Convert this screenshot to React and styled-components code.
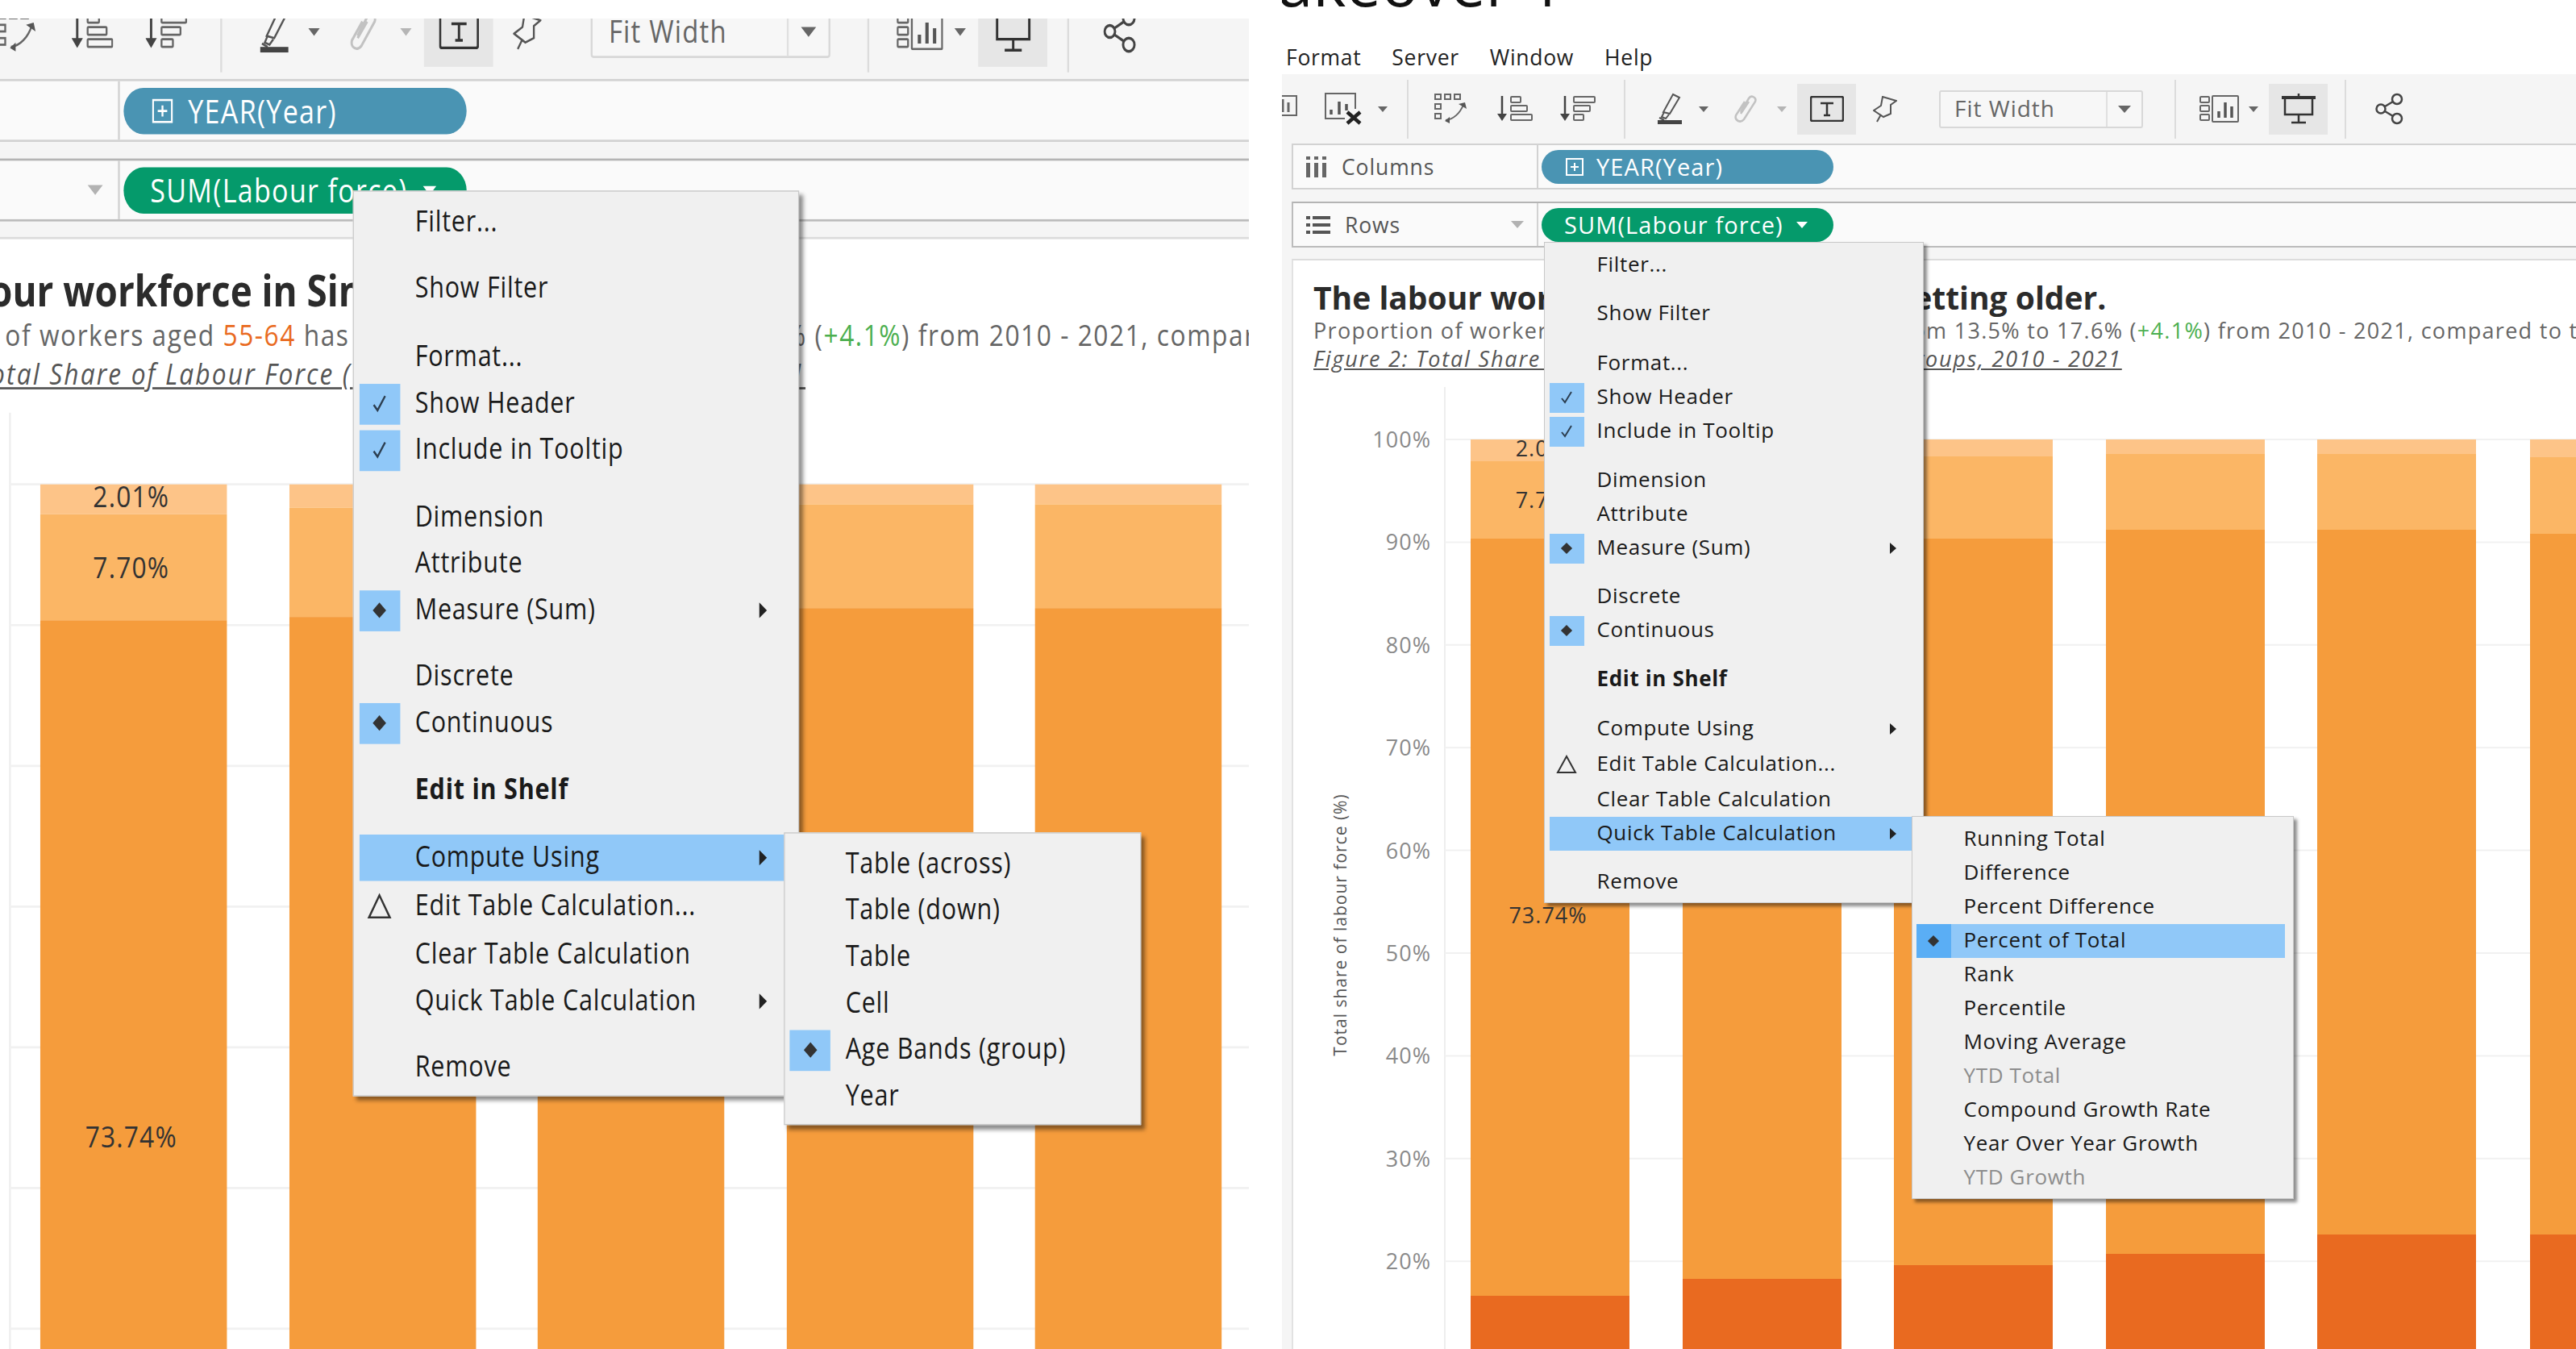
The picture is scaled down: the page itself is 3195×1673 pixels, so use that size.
import React from 'react';
import styled, { createGlobalStyle } from 'styled-components';

const UI_FONT = '"Open Sans", "Noto Sans", Arial, sans-serif';

const GlobalStyle = createGlobalStyle`
  html, body {
    margin: 0;
    padding: 0;
    background: #fff;
    overflow: hidden;
  }
  * {
    box-sizing: border-box;
  }
`;

const Page = styled.div`
  width: 3195px;
  height: 1673px;
  display: flex;
  gap: 41px;
  overflow: hidden;
  background: #fff;
  font-family: ${UI_FONT};
`;

// left half is the same window blown up unevenly, then cropped
const LeftCrop = styled.div`
  width: 1549px;
  height: 1650px;
  margin-top: 23px;
  overflow: hidden;
  flex: none;
`;

const RightPane = styled.div`
  width: 1605px;
  height: 1673px;
  flex: none;
  display: flex;
  flex-direction: column;
  overflow: hidden;
`;

const AppHeader = styled.div`
  height: 92px;
  flex: none;
  background: #fff;
`;

const SheetTitle = styled.div`
  font-size: 78px;
  line-height: 78px;
  height: 78px;
  margin: -61px 0 0 -5px;
  color: #111;
  white-space: nowrap;
`;

const MenuBar = styled.div`
  display: flex;
  gap: 38px;
  height: 28px;
  margin-top: 40px;
  padding-left: 5px;
  font-size: 26.5px;
  line-height: 28px;
  letter-spacing: 0.7px;
  color: #222;
`;

const Body = styled.div`
  position: relative;
  width: 1605px;
  height: 1581px;
  background: #f5f5f5;
  display: flex;
  flex-direction: column;
  flex: none;
  ${p => p.$stretched && `
    transform-origin: 0 0;
    transform: translate(-225px, -42.9px) scale(1.175, 1.37);
  `}
`;

const Toolbar = styled.div`
  height: 86px;
  flex: none;
  display: flex;
  align-items: center;
`;

const Icon = styled.svg`
  display: block;
  flex: none;
  margin-left: ${p => p.$ml || 0}px;
`;

const Caret = styled.span`
  display: block;
  flex: none;
  width: 0;
  height: 0;
  margin-left: ${p => p.$ml || 0}px;
  border-left: ${p => p.$size || 6}px solid transparent;
  border-right: ${p => p.$size || 6}px solid transparent;
  border-top: ${p => (p.$size || 6) + 1}px solid ${p => p.$color || '#666'};
`;

const ToolSep = styled.span`
  display: block;
  flex: none;
  width: 2px;
  height: 73px;
  margin-left: ${p => p.$ml}px;
  background: #dcdcdc;
`;

const ActiveTool = styled.div`
  flex: none;
  width: 73px;
  height: 63px;
  margin-left: ${p => p.$ml}px;
  background: #e6e6e6;
  display: flex;
  align-items: center;
  justify-content: center;
`;

const FitSelect = styled.div`
  flex: none;
  width: 253px;
  height: 47px;
  margin-left: ${p => p.$ml}px;
  display: flex;
  align-items: stretch;
  border: 2px solid #d8d8d8;
  border-radius: 3px;
  background: #f7f7f7;
  color: #666;
  font-size: 28px;
`;

const FitValue = styled.div`
  flex: 1;
  padding-left: 17px;
  line-height: 40px;
  letter-spacing: 1px;
  border-right: 2px solid #e0e0e0;
`;

const FitArrow = styled.div`
  width: 42px;
  display: flex;
  align-items: center;
  justify-content: center;
`;

const Shelf = styled.div`
  flex: none;
  height: 57px;
  margin: ${p => p.$top}px 0 0 12px;
  display: flex;
  align-items: center;
  background: #fafafa;
  border: 2px solid #d2d2d2;
  border-right: none;
  ${p => p.$active && 'border-color: #b4b4b4 #bcbcbc #bcbcbc;'}
`;

const ShelfLabel = styled.div`
  position: relative;
  width: 304px;
  height: 100%;
  flex: none;
  display: flex;
  align-items: center;
  gap: 18px;
  padding-left: 16px;
  border-right: 2px solid #d2d2d2;
  color: #555;
  font-size: 26.5px;
  letter-spacing: 0.9px;
`;

const ShelfArrow = styled.span`
  margin-left: auto;
  margin-right: 16px;
`;

const Pill = styled.div`
  flex: none;
  width: 362px;
  height: 42px;
  margin-left: 4px;
  padding-left: ${p => p.$pad}px;
  display: flex;
  align-items: center;
  gap: 16px;
  border-radius: 21px;
  background: ${p => p.$color};
  color: #fff;
  font-size: 29px;
  letter-spacing: 1.1px;
  white-space: nowrap;
`;

const View = styled.div`
  flex: 1;
  margin: 14px 0 0 12px;
  background: #fff;
  border-top: 2px solid #dcdcdc;
  border-left: 2px solid #e2e2e2;
  overflow: hidden;
`;

const Headline = styled.div`
  padding: 25px 0 13px 25px;
  white-space: nowrap;
`;

const Title = styled.div`
  height: 42px;
  line-height: 42px;
  font-size: 39px;
  font-weight: 700;
  color: #2b2b2b;
`;

const Subtitle = styled.div`
  height: 39px;
  line-height: 39px;
  font-size: 27px;
  letter-spacing: 1.3px;
  color: #666;
`;

const Hot = styled.span`
  color: ${p => p.$color};
`;

const Spread = styled.span`
  word-spacing: ${p => p.$gap}px;
`;

const Caption = styled.div`
  height: 36px;
  line-height: 32px;
  font-size: 27px;
  font-style: italic;
  letter-spacing: 1.8px;
  color: #555;
  text-decoration: underline;
`;

const Chart = styled.svg`
  display: block;
`;

const ContextMenu = styled.div`
  position: absolute;
  left: ${p => p.$left}px;
  top: ${p => p.$top}px;
  width: ${p => p.$width}px;
  padding: 7px 0 4px;
  background: #f0f0f0;
  border: 1.5px solid #c8c8c8;
  box-shadow: 4px 4px 4px rgba(0, 0, 0, 0.45);
  color: #1a1a1a;
  font-size: 26px;
  letter-spacing: 0.65px;
  white-space: nowrap;
`;

const MenuRow = styled.div`
  display: flex;
  align-items: center;
  height: 42px;
  margin: ${p => p.$gap || 0}px ${p => p.$side[1]}px 0 ${p => p.$side[0]}px;
  background: ${p => (p.$hot ? '#90c8f8' : 'transparent')};
  color: ${p => (p.$off ? '#8d8d8d' : 'inherit')};
  font-weight: ${p => (p.$bold ? 700 : 400)};
`;

const MarkBox = styled.div`
  flex: none;
  width: 43px;
  height: ${p => (p.$hot ? 42 : 37)}px;
  display: flex;
  align-items: center;
  justify-content: center;
  background: ${p => (p.$hot ? '#5aaef5' : p.$on ? '#90c8f8' : 'transparent')};
`;

const Diamond = styled.span`
  display: block;
  width: 10px;
  height: 10px;
  background: #333;
  transform: rotate(45deg);
`;

const RowLabel = styled.span`
  margin-left: 16px;
  padding-bottom: 4px;
`;

const SubArrow = styled.span`
  margin-left: auto;
  margin-right: 27px;
  width: 0;
  height: 0;
  border-top: 7px solid transparent;
  border-bottom: 7px solid transparent;
  border-left: 8px solid #222;
`;

const SIDE_MAIN = [6, 6];
const SIDE_SUB = [5, 10];

const FIELD_MENU = [
  { label: 'Filter...' },
  { label: 'Show Filter', gap: 18 },
  { label: 'Format...', gap: 20 },
  { label: 'Show Header', mark: 'check' },
  { label: 'Include in Tooltip', mark: 'check' },
  { label: 'Dimension', gap: 19 },
  { label: 'Attribute' },
  { label: 'Measure (Sum)', mark: 'dot', arrow: true },
  { label: 'Discrete', gap: 18 },
  { label: 'Continuous', mark: 'dot' },
  { label: 'Edit in Shelf', gap: 19, bold: true },
  { label: 'Compute Using', gap: 19, arrow: true },
  { label: 'Edit Table Calculation...', gap: 2, mark: 'delta' },
  { label: 'Clear Table Calculation', gap: 2 },
  { label: 'Quick Table Calculation', arrow: true },
  { label: 'Remove', gap: 18 },
];

const COMPUTE_MENU = [
  { label: 'Table (across)' },
  { label: 'Table (down)' },
  { label: 'Table' },
  { label: 'Cell' },
  { label: 'Age Bands (group)', mark: 'dot' },
  { label: 'Year' },
];

const QUICK_MENU = [
  { label: 'Running Total' },
  { label: 'Difference' },
  { label: 'Percent Difference' },
  { label: 'Percent of Total', mark: 'dot', hot: true },
  { label: 'Rank' },
  { label: 'Percentile' },
  { label: 'Moving Average' },
  { label: 'YTD Total', off: true },
  { label: 'Compound Growth Rate' },
  { label: 'Year Over Year Growth' },
  { label: 'YTD Growth', off: true },
];

// x, end of light band, end of mid band, start of dark band
const BARS = [
  [1824, 572, 668, 1607],
  [2087, 566, 665, 1586],
  [2349, 566, 668, 1569],
  [2612, 563, 657, 1555],
  [2874, 563, 657, 1531],
  [3138, 567, 662, 1531],
];

const TICKS = [100, 90, 80, 70, 60, 50, 40, 30, 20, 10];

function MenuMark({ mark, hot }) {
  if (mark === 'delta') {
    return (
      <MarkBox>
        <Icon width="26" height="24" viewBox="0 0 26 24">
          <path d="M13 2 L24 22 H2 Z" fill="none" stroke="#333" strokeWidth="2" />
        </Icon>
      </MarkBox>
    );
  }
  return (
    <MarkBox $on={!!mark} $hot={hot && mark}>
      {mark === 'dot' && <Diamond />}
      {mark === 'check' && (
        <Icon width="18" height="18" viewBox="0 0 18 18">
          <path d="M3 10 L7 15 L15 2" fill="none" stroke="#2c3e50" strokeWidth="2" />
        </Icon>
      )}
    </MarkBox>
  );
}

function MenuRows({ items, side, hotLabel }) {
  return items.map(item => {
    const hot = item.hot || item.label === hotLabel;
    return (
      <MenuRow key={item.label} $gap={item.gap} $side={side} $hot={hot} $off={item.off} $bold={item.bold}>
        <MenuMark mark={item.mark} hot={hot} />
        <RowLabel>{item.label}</RowLabel>
        {item.arrow && <SubArrow />}
      </MenuRow>
    );
  });
}

const MiniChart = ({ ml }) => (
  <Icon $ml={ml} width="42" height="36" viewBox="0 0 42 36" fill="none" stroke="#666" strokeWidth="2">
    <path d="M2 8 V2 H40 V26 H14" />
    <path d="M2 26 V34 H10 M2 30 H6" />
    <path d="M16 22 V15 M23 22 V6 M30 22 V10" strokeWidth="3" />
  </Icon>
);

const ClearChart = ({ ml }) => (
  <Icon $ml={ml} width="48" height="40" viewBox="0 0 48 40" fill="none">
    <path d="M26 32 H2 V1 H39 V20" stroke="#666" strokeWidth="2" />
    <path d="M9 27 V21 M19 27 V11 M28 22 V14" stroke="#555" strokeWidth="3.5" />
    <path d="M29 24 L45 38 M45 24 L29 38" stroke="#222" strokeWidth="4.5" />
  </Icon>
);

const SwapAxes = ({ ml }) => (
  <Icon $ml={ml} width="42" height="38" viewBox="0 0 42 38" fill="none" stroke="#666" strokeWidth="2">
    <rect x="1" y="1" width="7" height="6" />
    <rect x="13" y="1" width="7" height="6" />
    <rect x="25" y="1" width="7" height="6" />
    <rect x="1" y="13" width="7" height="6" />
    <rect x="1" y="25" width="7" height="6" />
    <path d="M14 33 C24 32 32 24 36 14" />
    <path d="M30 13 L38 11 L40 19 Z M19 29 L13 34 L19 37 Z" fill="#555" stroke="none" />
  </Icon>
);

const SortBars = ({ ml, descending }) => {
  const widths = descending ? [26, 20, 12] : [12, 20, 26];
  return (
    <Icon $ml={ml} width="44" height="32" viewBox="0 0 44 32" fill="none">
      <path d="M6 0 V26" stroke="#444" strokeWidth="2.5" />
      <path d="M0 22 H12 L6 31 Z" fill="#444" />
      {widths.map((w, i) => (
        <rect key={i} x="17" y={1 + i * 11} width={w} height="7" rx="1" stroke="#666" strokeWidth="2" />
      ))}
    </Icon>
  );
};

const Highlighter = ({ ml }) => (
  <Icon $ml={ml} width="30" height="40" viewBox="0 0 30 40" fill="none">
    <path d="M19 2 L27 6 L15 26 L7 24 Z" stroke="#555" strokeWidth="2" />
    <path d="M8 24 L5 30 L10 32 L14 27 M2 31 L8 34" stroke="#555" strokeWidth="2" />
    <rect x="0" y="34" width="30" height="5" fill="#444" />
  </Icon>
);

const Clip = ({ ml }) => (
  <Icon $ml={ml} width="30" height="36" viewBox="0 0 30 36" fill="none" stroke="#c2c2c2" strokeWidth="2.5">
    <path d="M9 22 L19 5 C22 0 29 4 27 9 L13 31 C9 36 1 33 3 26 L14 9 M9 24 L19 9" />
  </Icon>
);

const TextBox = () => (
  <Icon width="42" height="32" viewBox="0 0 42 32" fill="none">
    <rect x="1" y="1" width="40" height="30" rx="2" stroke="#333" strokeWidth="2.5" />
    <path d="M13 9 H29 M21 9 V24 M17 24 H25" stroke="#333" strokeWidth="2.5" />
  </Icon>
);

const Pin = ({ ml }) => (
  <Icon $ml={ml} width="30" height="33" viewBox="0 0 30 33" fill="none" stroke="#555" strokeWidth="2">
    <path d="M12 1 L29 6 L22 11 L22 22 L13 26 L1 18 L10 12 Z" />
    <path d="M10 23 L5 32" />
  </Icon>
);

const ShowMe = ({ ml }) => (
  <Icon $ml={ml} width="49" height="34" viewBox="0 0 49 34" fill="none" stroke="#666" strokeWidth="2">
    <rect x="1" y="2" width="11" height="7" rx="1" />
    <rect x="1" y="13" width="11" height="7" rx="1" />
    <rect x="1" y="24" width="11" height="7" rx="1" />
    <rect x="16" y="1" width="32" height="32" rx="1" />
    <path d="M24 28 V20 M32 28 V9 M40 28 V14" stroke="#555" strokeWidth="3.5" />
  </Icon>
);

const Presentation = () => (
  <Icon width="42" height="38" viewBox="0 0 42 38" fill="none" stroke="#333" strokeWidth="2.5">
    <path d="M0 5 H42" strokeWidth="4" />
    <path d="M4 6 V26 H38 V6 M21 26 V35 M12 36 H30" />
    <path d="M21 0 V3" />
  </Icon>
);

const Share = ({ ml }) => (
  <Icon $ml={ml} width="35" height="40" viewBox="0 0 35 40" fill="none" stroke="#444" strokeWidth="2.5">
    <circle cx="7" cy="20" r="5.5" />
    <circle cx="27" cy="8" r="6" />
    <circle cx="27" cy="32" r="6" />
    <path d="M12 17 L22 11 M12 23 L22 29" />
  </Icon>
);

function TableauChart() {
  const y = t => 545 + (100 - t) * 12.74;
  return (
    <Chart width="1591" height="1195" viewBox="1604 478 1591 1195">
      <path d="M1792 480 V1673" stroke="#eeeeee" strokeWidth="2" />
      {TICKS.map(t => (
        <g key={t}>
          <path d={`M1792 ${y(t)} H3195`} stroke="#f1f1f1" strokeWidth="2" />
          <text x="1775" y={y(t) + 10} textAnchor="end" fontFamily={UI_FONT} fontSize="27" letterSpacing="1" fill="#8a8a8a">
            {t}%
          </text>
        </g>
      ))}
      <text
        transform="rotate(-90 1663 1147)"
        x="1663"
        y="1154"
        textAnchor="middle"
        fontFamily={UI_FONT}
        fontSize="21"
        letterSpacing="1"
        fill="#555"
      >
        Total share of labour force (%)
      </text>
      {BARS.map(([x, light, mid, dark]) => (
        <g key={x}>
          <rect x={x} y="545" width="197" height={light - 545} fill="#fdc488" />
          <rect x={x} y={light} width="197" height={mid - light} fill="#fbb665" />
          <rect x={x} y={mid} width="197" height={dark - mid} fill="#f59c3c" />
          <rect x={x} y={dark} width="197" height={1673 - dark} fill="#e96a20" />
        </g>
      ))}
      <g fontFamily={UI_FONT} fontSize="27" letterSpacing="1" fill="#333" textAnchor="middle">
        <text x="1920" y="566">2.01%</text>
        <text x="1920" y="630">7.70%</text>
        <text x="1920" y="1145">73.74%</text>
      </g>
    </Chart>
  );
}

function Workspace({ stretched, menuLeft, menuTop, hotLabel, subLeft, subTop, subWidth, subItems, subSide }) {
  return (
    <Body $stretched={stretched}>
      <Toolbar>
        <MiniChart ml={-22} />
        <ClearChart ml={32} />
        <Caret $ml={19} />
        <ToolSep $ml={24} />
        <SwapAxes ml={32} />
        <SortBars ml={36} />
        <SortBars ml={34} descending />
        <ToolSep $ml={35} />
        <Highlighter ml={40} />
        <Caret $ml={21} />
        <Clip ml={31} />
        <Caret $ml={24} $color="#b5b5b5" />
        <ActiveTool $ml={13}>
          <TextBox />
        </ActiveTool>
        <Pin ml={21} />
        <FitSelect $ml={52}>
          <FitValue>Fit Width</FitValue>
          <FitArrow>
            <Caret $size={8} />
          </FitArrow>
        </FitSelect>
        <ToolSep $ml={39} />
        <ShowMe ml={29} />
        <Caret $ml={12} />
        <ActiveTool $ml={13}>
          <Presentation />
        </ActiveTool>
        <ToolSep $ml={21} />
        <Share ml={36} />
      </Toolbar>

      <Shelf $top={0}>
        <ShelfLabel>
          <Icon width="26" height="26" viewBox="0 0 26 26" fill="#666">
            <path d="M0 0 h5 v4 h-5 z M10 0 h5 v4 h-5 z M20 0 h5 v4 h-5 z M0 8 h5 v18 h-5 z M10 8 h5 v18 h-5 z M20 8 h5 v18 h-5 z" />
          </Icon>
          Columns
        </ShelfLabel>
        <Pill $color="#4a94b3" $pad={30}>
          <Icon width="22" height="22" viewBox="0 0 22 22" fill="none" stroke="#fff" strokeWidth="2">
            <rect x="1" y="1" width="20" height="20" />
            <path d="M11 6 V16 M6 11 H16" />
          </Icon>
          YEAR(Year)
        </Pill>
      </Shelf>

      <Shelf $top={15} $active>
        <ShelfLabel>
          <Icon width="30" height="24" viewBox="0 0 30 24" fill="#555">
            <path d="M0 1 h5 v4 h-5 z M0 10 h5 v4 h-5 z M0 19 h5 v4 h-5 z M8 1 h22 v4 h-22 z M8 10 h22 v4 h-22 z M8 19 h22 v4 h-22 z" />
          </Icon>
          Rows
          <ShelfArrow>
            <Caret $size={8} $color="#b2b2b2" />
          </ShelfArrow>
        </ShelfLabel>
        <Pill $color="#059a6b" $pad={28}>
          SUM(Labour force)
          <Caret $size={7} $color="#fff" />
        </Pill>
      </Shelf>

      <View>
        <Headline>
          <Title>The labour workforce in Singapore is getting older.</Title>
          <Subtitle>
            Proportion of workers aged <Hot $color="#e96a20">55-64</Hot> <Spread $gap={24}>has increased from</Spread> 13.5% to
            17.6% (<Hot $color="#4caf50">+4.1%</Hot>) from 2010 - 2021, compared to the other age groups.
          </Subtitle>
          <Caption>
            Figure 2: Total Share of Labour Force (<Spread $gap={32}>%) by Age</Spread> Groups, 2010 - 2021
          </Caption>
        </Headline>
        <TableauChart />
      </View>

      <ContextMenu $left={menuLeft} $top={menuTop} $width={471.5}>
        <MenuRows items={FIELD_MENU} side={SIDE_MAIN} hotLabel={hotLabel} />
        <ContextMenu $left={subLeft} $top={subTop} $width={subWidth}>
          <MenuRows items={subItems} side={subSide} />
        </ContextMenu>
      </ContextMenu>
    </Body>
  );
}

export default function App() {
  return (
    <Page>
      <GlobalStyle />
      <LeftCrop>
        <Workspace
          stretched
          menuLeft={563.5}
          menuTop={187}
          hotLabel="Compute Using"
          subLeft={454.5}
          subTop={580}
          subWidth={377}
          subItems={COMPUTE_MENU}
          subSide={SIDE_SUB}
        />
      </LeftCrop>
      <RightPane>
        <AppHeader>
          <SheetTitle>akeover 1</SheetTitle>
          <MenuBar>
            <span>Format</span>
            <span>Server</span>
            <span>Window</span>
            <span>Help</span>
          </MenuBar>
        </AppHeader>
        <Workspace
          menuLeft={324.5}
          menuTop={208}
          hotLabel="Quick Table Calculation"
          subLeft={455}
          subTop={711}
          subWidth={474}
          subItems={QUICK_MENU}
          subSide={SIDE_SUB}
        />
      </RightPane>
    </Page>
  );
}
